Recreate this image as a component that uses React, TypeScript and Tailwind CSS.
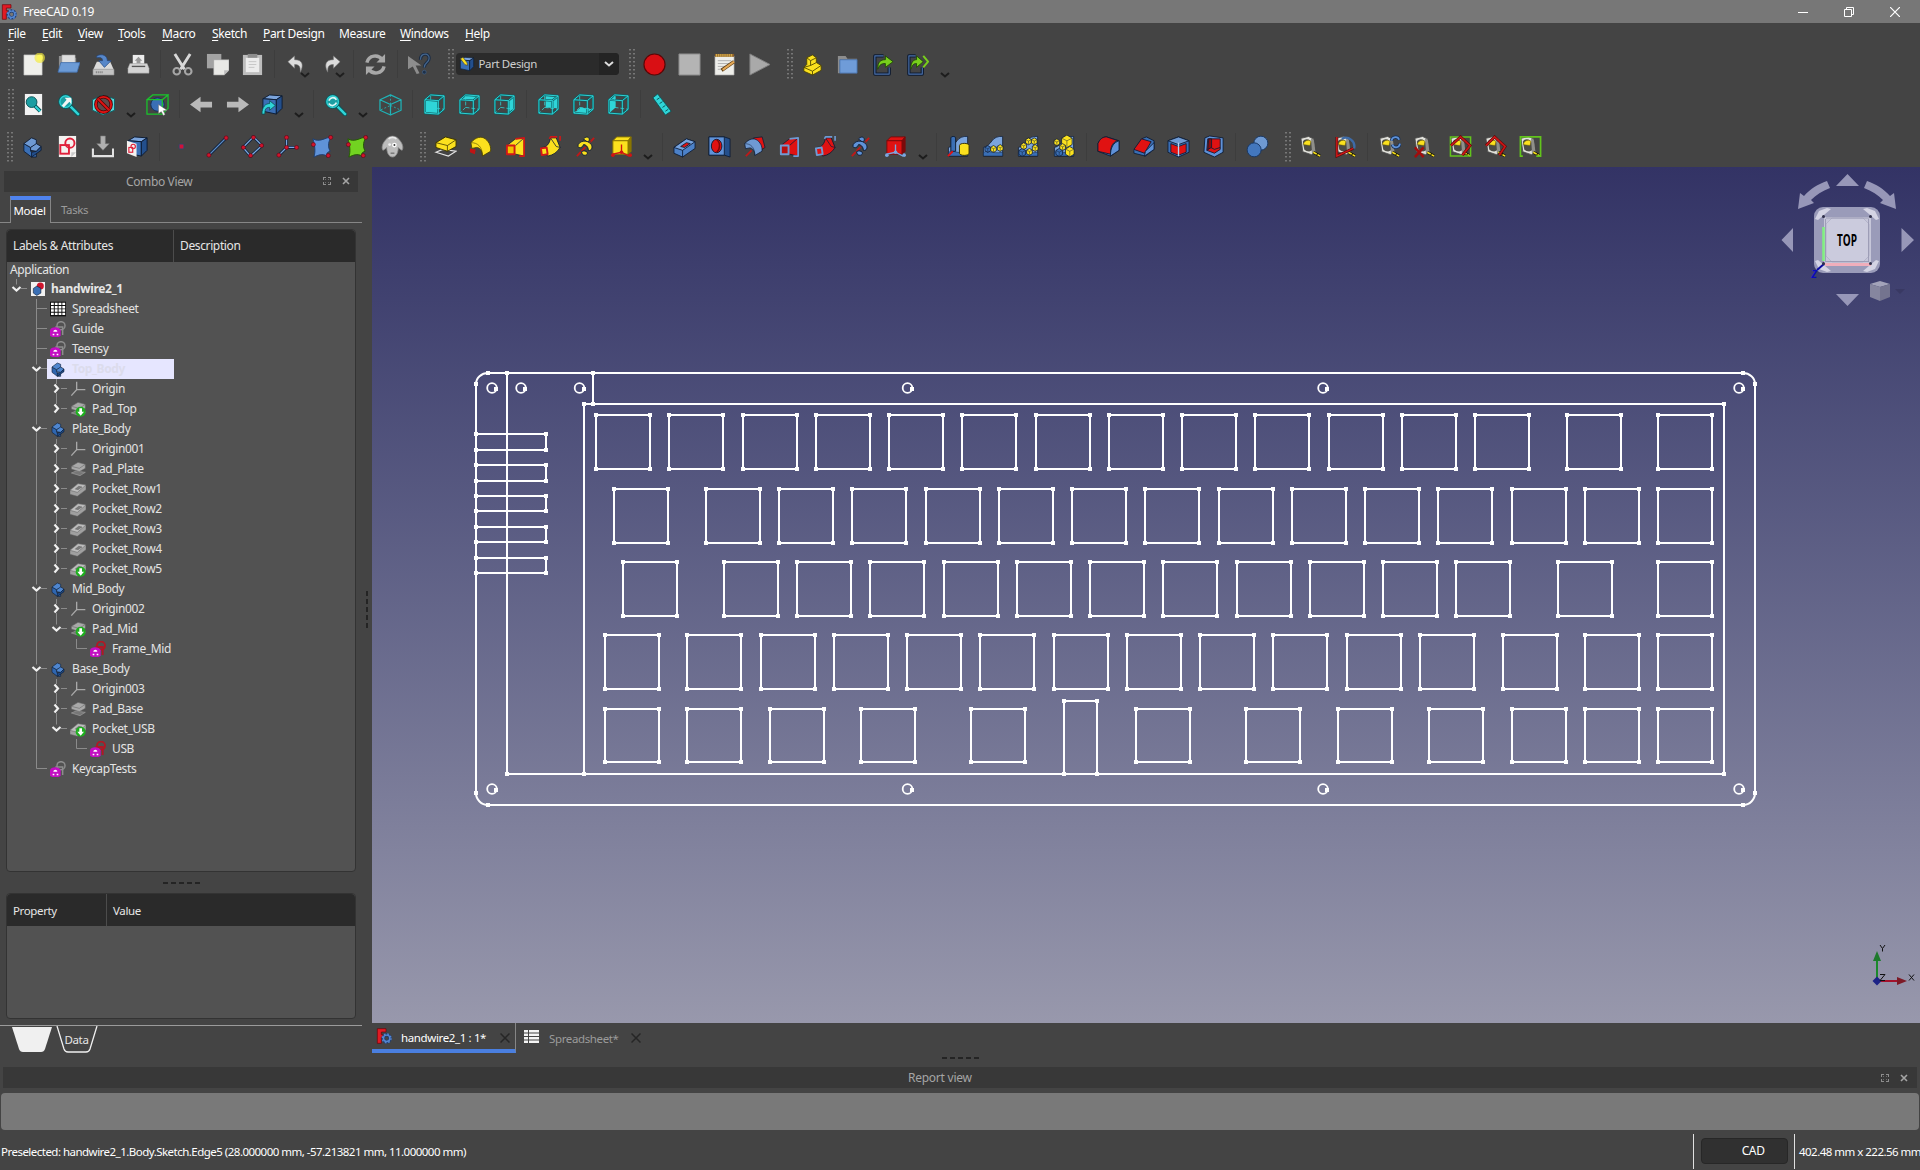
import React from "react";

type Drawing = React.ReactNode;

const CY = "#2fd5d8";
const BL = "#3a6fb5";
const BD = "#0e1c33";
const YE = "#fbe11e";
const RD = "#e01212";

/* ---------- shared shapes ---------- */

const Cube = ({ top, left, right, line = BD }: { top: string; left: string; right: string; line?: string }) => (
  <g stroke={line} strokeWidth="1" strokeLinejoin="round">
    <path d="M2 6 9 2l13 1-6 4z" fill={top} />
    <path d="M2 6l14 1v15L2 19z" fill={left} />
    <path d="M16 7l6-4v13l-6 6z" fill={right} />
  </g>
);

const viewFaces: Record<string, string> = {
  front: "M2 7l14 1v14L2 21z",
  top: "M2 7l6-5 14 1-6 5z",
  right: "M16 8l6-5v14l-6 5z",
  rear: "M9 3l12 1v12l-12-1z",
  bottom: "M2 21l7-6 12 2-5 5z",
  left: "M2 7l7-5v13l-7 6z",
};

const ViewCube = ({ face }: { face: string }) => (
  <g strokeLinejoin="round">
    <path d={viewFaces[face]} fill={CY} />
    <g fill="none" stroke="#0d5f63" strokeWidth="2.2">
      <path d="M2 7l14 1v14L2 21zM2 7l6-5 14 1-6 5M22 3v14l-6 5" />
    </g>
    <g fill="none" stroke={CY} strokeWidth="1">
      <path d="M2 7l14 1v14L2 21zM2 7l6-5 14 1-6 5M22 3v14l-6 5" />
      <path d="M8 3v12l-6 6M8 15l14 2" strokeDasharray="4 2" strokeWidth="0.8" />
    </g>
  </g>
);

const Magnifier = ({ children }: { children?: Drawing }) => (
  <>
    <path d="M14 14l8 8" stroke="#0b5558" strokeWidth="4.6" strokeLinecap="round" />
    <path d="M14 14l8 8" stroke={CY} strokeWidth="2.6" strokeLinecap="round" />
    <circle cx="9" cy="9" r="7.3" fill="#1c9ea2" stroke="#0b5558" />
    <circle cx="9" cy="9" r="6" fill="none" stroke={CY} strokeWidth="1.2" />
    {children}
  </>
);

const Dots = ({ pts }: { pts: number[][] }) => (
  <g fill="#d0142c" stroke="#5a0613" strokeWidth="0.6">
    {pts.map(([x, y], i) => (
      <circle key={i} cx={x} cy={y} r="2.1" />
    ))}
  </g>
);

const FreeCADMark = () => (
  <>
    <path d="M2 1h13v5H8v4h5v4H8v9H2z" fill="#e01b24" stroke="#6e0008" strokeWidth="1" />
    <circle cx="16" cy="15.5" r="5.2" fill="none" stroke="#1d3a70" strokeWidth="5" />
    <circle cx="16" cy="15.5" r="6.600" fill="none" stroke="#5586cf" strokeWidth="2" strokeDasharray="2.6 2.6" />
    <circle cx="16" cy="15.5" r="4.800" fill="none" stroke="#5586cf" strokeWidth="2.2" />
  </>
);

const Tape = ({ children }: { children?: Drawing }) => (
  <>
    <path d="M2 3.500l8-2 5 2.500 2 13-4 3.500-9-3z" fill="#e2e2dc" stroke="#4b4b4b" strokeWidth="0.9" />
    <path d="M12.500 3l3 2 1.500 12-3.500 3z" fill="#8f8f8a" />
    <path d="M4 7c2-4 8-3 9 1l.5 8c-2 2-6 1-8-1z" fill="#4c4c46" />
    <path d="M4.500 10a5 5 0 0 1 8-3.500l-1 4.500z" fill={YE} stroke="#6b5d00" strokeWidth="0.500" />
    <path d="M15 18l7 4" stroke="#1c1c00" strokeWidth="3" />
    <path d="M15 18l7 4" stroke={YE} strokeWidth="1.700" strokeDasharray="4 1" />
    {children}
  </>
);

const BodyShape = ({ c, d, l }: { c: string; d: string; l: string }) => (
  <g stroke={BD} strokeWidth="0.9" strokeLinejoin="round">
    <path d="M3 9l7 4 0 4 6 3v3L11 23 3 17z" fill={c} />
    <path d="M3 9l8-6 5 2v5l-6 3z" fill={l} />
    <path d="M10 13l6-4 5 3-5 5-6-1z" fill={l} />
    <path d="M11 23l10-7v-4l-5 5-5 1z" fill={d} />
  </g>
);

const Wedge = ({ a, b, line }: { a: string; b: string; line: string }) => (
  <g strokeLinejoin="round">
    <path d="M3 11l9-7 9-1v19l-9-2H3z" fill={b} stroke={BD} strokeWidth="0.8" />
    <path d="M12 11l9-8" stroke={BD} strokeWidth="0.8" />
    <path d="M12 4l9-1v19h-5" fill="none" stroke={line} strokeWidth="1.8" />
    <path d="M3 11h8v9H3z" fill={a} stroke={line} strokeWidth="2" />
  </g>
);

const Pipe = ({ a, line }: { a: string; line: string }) => (
  <g strokeLinejoin="round">
    <path d="M3 13c5 0 8-4 9-10h6l4 10c-3 5-7 8-13 9z" fill={a} stroke={BD} strokeWidth="0.9" />
    <path d="M12 3l6 9 4 1" fill="none" stroke={BD} strokeWidth="0.8" />
    <path d="M11 4l1-2h7M22 1v5" fill="none" stroke={line} strokeWidth="1.700" />
    <path d="M2 14l6-1 1 7-6 1z" fill={a} stroke={line} strokeWidth="2" />
  </g>
);

const Helix = ({ a, line }: { a: string; line: string }) => (
  <g>
    <path d="M3 22L21 3" stroke={line} strokeWidth="2" strokeDasharray="6 1" />
    <path d="M4 12c0-6 10-8 14-2 2 3 0 7-3 6 0-4-3-6-5-6-1 2-3 5-6 2z" fill={a} stroke={BD} />
    <path d="M10 4c3-3 6-2 6 1s-4 2-6-1z" fill={a} stroke={BD} />
    <path d="M8 18c0-2 6-2 6 1s-6 3-6-1z" fill={a} stroke={BD} />
  </g>
);

const Arch = ({ a, s }: { a: string; s: string }) => (
  <g stroke={s} strokeLinejoin="round">
    <path d="M2 8c5-6 11-7 15-4 5 4 6 9 5.500 13L14 22c0-6-3-9-6-9l-5 1z" fill={a} strokeWidth="0.9" />
    <path d="M2 8c7 0 12 4 12 14" fill="none" strokeWidth="0.600" />
  </g>
);

const PrimCube = ({ f, s, dot }: { f: string; s: string; dot: string }) => (
  <g strokeLinejoin="round">
    <path d="M3 6l4-4h15l-3 4z" fill={f} stroke={s} />
    <path d="M3 6h16v14H3z" fill={f} stroke={s} />
    <path d="M19 6l3-4v15l-3 3z" fill={s} stroke={s} />
    <path d="M12 10v8M3 20l9-2 8 4" fill="none" stroke={dot} strokeWidth="1.4" />
    <g fill={dot}>
      <circle cx="3" cy="21" r="1.9" />
      <circle cx="12" cy="18" r="1.9" />
      <circle cx="21" cy="21" r="1.9" />
    </g>
  </g>
);

const Terrain = ({ children }: { children?: Drawing }) => (
  <g strokeLinejoin="round">
    <path d="M1.500 22V13c4-1 6-3 9-7 2-3 6-5 11-4.500V22z" fill="#7ba4dc" stroke={BD} strokeWidth="0.8" />
    <path d="M1.500 22v-4c6-3 8 2 20 0v4z" fill={BL} stroke={BD} strokeWidth="0.500" />
    {children}
  </g>
);

const YBox = ({ x, y, s = 7, c = YE }: { x: number; y: number; s?: number; c?: string }) => (
  <g stroke={BD} strokeWidth="0.8" fill={c}>
    <path d={`M${x} ${y + s * 0.3}l${s * 0.5} ${-s * 0.3}l${s * 0.5} ${s * 0.3}v${s * 0.6}l${-s * 0.5} ${s * 0.3}l${-s * 0.5} ${-s * 0.3}z`} />
    <path d={`M${x} ${y + s * 0.3}l${s * 0.5} ${s * 0.25}l${s * 0.5} ${-s * 0.25}M${x + s * 0.5} ${y + s * 0.55}v${s * 0.6}`} fill="none" strokeWidth="0.500" />
  </g>
);

const Curl = ({ flip }: { flip?: boolean }) => (
  <g transform={flip ? "translate(24 0) scale(-1 1)" : undefined}>
    <path d="M3 9l7-6v4c8 0 10 5 6 13 0-6-1-8-6-8v4z" fill="#dcdcdc" stroke="#777" strokeWidth="0.6" />
  </g>
);

const ArrowLeft = () => <path d="M0 12L11 4v5h12v6H11v5z" fill="#b9b9b9" />;

/* ---------- toolbar drawings ---------- */

const icons: Record<string, Drawing> = {
  new: (
    <>
      <path d="M2 2h19v21H2z" fill="#efefeb" stroke="#bbb" strokeWidth="0.6" />
      <circle cx="18.500" cy="5" r="5.500" fill="#f3ea3a" opacity="0.65" />
      <circle cx="18.500" cy="5" r="3.200" fill="#fdf75b" />
    </>
  ),
  open: (
    <>
      <path d="M2 3h7l2 2h9v15H2z" fill="#8f8f8f" />
      <path d="M5 2h14v12H5z" fill="#dedede" stroke="#888" strokeWidth="0.5" />
      <path d="M4 10h20l-3 10H1z" fill="#6c9bd6" stroke="#3c6aa8" strokeWidth="0.8" />
    </>
  ),
  save: (
    <>
      <path d="M5 9h14l4 9H1z" fill="#dadada" />
      <path d="M1 17h22v6H1z" fill="#c3c3c3" stroke="#888" strokeWidth="0.6" />
      <path d="M4 20h7" stroke="#777" strokeDasharray="1 1" strokeWidth="2" />
      <path d="M5 3c6-3 11 0 11 5h4l-7 7-6-7h4c0-3-2-4-6-3z" fill="#5787c9" stroke="#23457d" strokeWidth="0.7" />
    </>
  ),
  print: (
    <>
      <path d="M6 2h12v12H6z" fill="#ededed" />
      <path d="M12 4l4 4h-2v3h-4V8H8z" fill="#999" />
      <path d="M3 11h18l2 5v5H1v-5z" fill="#d4d4d4" stroke="#999" strokeWidth="0.5" />
      <path d="M5 14h14" stroke="#555" strokeWidth="1.4" />
    </>
  ),
  cut: (
    <>
      <path d="M4 1l10 16M20 1L10 17" stroke="#d8d8d8" strokeWidth="3" />
      <circle cx="6" cy="19" r="3.4" fill="none" stroke="#a6a6a6" strokeWidth="2.2" />
      <circle cx="18" cy="19" r="3.4" fill="none" stroke="#a6a6a6" strokeWidth="2.2" />
    </>
  ),
  copy: (
    <>
      <path d="M1 1h15v15H1z" fill="#a3a3a3" />
      <path d="M8 7h16v11l-5 5H8z" fill="#e9e9e6" stroke="#999" strokeWidth="0.6" />
      <path d="M19 23v-5h5z" fill="#bcbcbc" />
    </>
  ),
  paste: (
    <>
      <path d="M2 2h20v21H2z" fill="#bdbdbd" />
      <path d="M5 5h14v15H5z" fill="#ececec" />
      <path d="M7 1h10v4H7z" fill="#8d8d8d" />
      <path d="M8 9h8M8 12h8M8 15h6" stroke="#c5c5c5" />
    </>
  ),
  undo: <Curl />,
  redo: <Curl flip />,
  refresh: (
    <g fill="none" stroke="#a8a8a8" strokeWidth="3.6">
      <path d="M3 10c2-8 12-9 16-3" />
      <path d="M21 14c-2 8-12 9-16 3" />
      <path d="M22 1v9h-9z" fill="#a8a8a8" stroke="none" />
      <path d="M2 23v-9h9z" fill="#a8a8a8" stroke="none" />
    </g>
  ),
  whats: (
    <>
      <path d="M0 3l14 10H8l4 8-3 1-4-8-5 3z" fill="#8d8d8d" />
      <path d="M13 7c0-8 10-7 9-1 0 4-5 4-5 9" fill="none" stroke="#1d2d44" strokeWidth="3.4" />
      <path d="M13 7c0-8 10-7 9-1 0 4-5 4-5 9" fill="none" stroke="#45678f" strokeWidth="1.2" />
      <circle cx="17" cy="20" r="2" fill="#1d3049" stroke="#45678f" strokeWidth="0.6" />
    </>
  ),
  pdesign: (
    <>
      <Cube top="#7ba4dc" left={BL} right="#234f8c" />
      <path d="M2 4l7 9 4 1-1-4-6-8z" fill={YE} stroke="#333" strokeWidth="0.8" />
    </>
  ),
  record: <circle cx="12" cy="12" r="11" fill="#d90f14" stroke="#5c0505" strokeWidth="1.2" />,
  stop: <path d="M1 1h22v22H1z" fill="#b4b4b4" stroke="#8a8a8a" />,
  macros: (
    <>
      <path d="M2 3h20v20H2z" fill="#eeeeea" stroke="#999" strokeWidth="0.6" />
      <path d="M2 1h20v3H2z" fill="#8c5f2a" />
      <path d="M3 2.5h18" stroke="#e3bd52" strokeDasharray="1 1" strokeWidth="3" />
      <path d="M5 8h14M5 11h14M5 14h8M5 17h5" stroke="#b0b0b0" />
      <path d="M9 18L22 9" stroke="#5d3b10" strokeWidth="3.6" />
      <path d="M10 17.5L22 9" stroke="#e3a857" strokeWidth="2.2" />
    </>
  ),
  play: <path d="M2 1l21 11L2 23z" fill="#a9a9a9" stroke="#808080" />,
  part: (
    <g stroke="#4c4300" strokeWidth="0.9" strokeLinejoin="round" fill={YE}>
      <path d="M3 15l3-3 0-7 6-3 4 3v5l5 3v5l-9 5-9-4z" />
      <path d="M6 5l4 3v5M10 8l6-3M10 13l-7 2 9 4 9-6M10 13l6-3M12 19v4" fill="none" />
    </g>
  ),
  folder: (
    <>
      <path d="M2 3h8l2 3h10v15H2z" fill="#8d8d8d" />
      <path d="M4 7h18v14H4z" fill="#6f9cd8" stroke="#3f6aa5" strokeWidth="0.8" />
    </>
  ),
  export: (
    <>
      <path d="M13 3H4v19h15v-7" fill="none" stroke="#0c1a30" strokeWidth="3.4" strokeLinejoin="round" />
      <path d="M13 3H4v19h15v-7" fill="none" stroke="#4a6fa8" strokeWidth="1.2" strokeLinejoin="round" />
      <path d="M7 17c0-8 3-10 8-10V3l8 6-8 6v-4c-4 0-6 1-8 6z" fill="#78cf1c" stroke="#1c4a00" strokeWidth="0.9" />
    </>
  ),
  exportAll: (
    <>
      <path d="M10 3H3v19h14v-7" fill="none" stroke="#0c1a30" strokeWidth="3.4" strokeLinejoin="round" />
      <path d="M10 3H3v19h14v-7" fill="none" stroke="#4a6fa8" strokeWidth="1.2" strokeLinejoin="round" />
      <path d="M5 17c0-8 3-10 6-10V3l7 6-7 6v-4c-3 0-4 1-6 6z" fill="#78cf1c" stroke="#1c4a00" strokeWidth="0.9" />
      <path d="M18 3l5 6-5 6" fill="none" stroke="#78cf1c" strokeWidth="2" />
    </>
  ),
  fitAll: (
    <>
      <path d="M3 1h18v22H3z" fill="#f2f2f2" />
      <path d="M13 13l6 6" stroke="#0b5558" strokeWidth="4" />
      <path d="M13 13l6 6" stroke={CY} strokeWidth="2" />
      <circle cx="10" cy="9.500" r="5.600" fill="#1c9ea2" stroke="#0b5558" />
    </>
  ),
  fitSel: (
    <Magnifier>
      <path d="M5 13l5-6-2-2h7v7l-2-3-6 6z" fill="#f4f4f4" />
    </Magnifier>
  ),
  drawStyle: (
    <>
      <path d="M0.500 7l10-5 13 4v12l-12 5-11-5z" fill="#58d6da" stroke="#0d5f63" />
      <circle cx="12" cy="12" r="8" fill="#5f4a4a" stroke="#4d0505" strokeWidth="3.600" />
      <circle cx="12" cy="12" r="8" fill="none" stroke={RD} strokeWidth="2" />
      <path d="M6.500 6.500l11 11" stroke="#4d0505" strokeWidth="3.600" />
      <path d="M6.500 6.500l11 11" stroke={RD} strokeWidth="2" />
    </>
  ),
  boxSel: (
    <>
      <circle cx="12" cy="12" r="7" fill={BL} stroke="#14305a" />
      <g fill="none" stroke="#19c52b" strokeWidth="1.3">
        <path d="M1 7h16v15H1zM1 7l6-5h16l-6 5M23 2v14l-6 6" />
      </g>
      <path d="M13 12l9 6-4 .5 2 4-2 1-2-4-3 2z" fill="#fff" stroke="#666" strokeWidth="0.5" />
    </>
  ),
  back: <ArrowLeft />,
  fwd: (
    <g transform="translate(24 0) scale(-1 1)">
      <ArrowLeft />
    </g>
  ),
  link: (
    <>
      <Cube top="#7ba4dc" left={BL} right="#234f8c" />
      <path d="M1 22c0-8 4-11 8-11V8l6 5-6 5v-3c-4 0-5 2-5 7z" fill={CY} stroke="#0b4b50" strokeWidth="0.8" />
    </>
  ),
  sync: (
    <Magnifier>
      <path d="M5 8c2-4 6-4 8-1M13 10c-2 4-6 4-8 1" fill="none" stroke="#d9f6f6" strokeWidth="1.8" />
    </Magnifier>
  ),
  iso: (
    <g fill="none" stroke="#1fb3b7" strokeWidth="1.3" strokeLinejoin="round">
      <path d="M1 7l11-5 11 5v11l-11 5-11-5zM1 7l11 5 11-5M12 12v11" />
      <path d="M12 2v11L1 18M12 13l11 5" strokeDasharray="2 2" strokeWidth="0.9" />
    </g>
  ),
  vFront: <ViewCube face="front" />,
  vTop: <ViewCube face="top" />,
  vRight: <ViewCube face="right" />,
  vRear: <ViewCube face="rear" />,
  vBottom: <ViewCube face="bottom" />,
  vLeft: <ViewCube face="left" />,
  ruler: (
    <>
      <path d="M7 1L2 5l13 18 6-4z" fill={CY} stroke="#0b5558" strokeWidth="0.9" />
      <path d="M9 5l-3 2M12 9l-3 2M15 13l-3 2M18 17l-3 2" stroke="#0b5558" />
    </>
  ),
  body: <BodyShape c={BL} d="#234f8c" l="#6f9ad3" />,
  sketch: (
    <>
      <path d="M3 1h18v22H3z" fill="#f4f2f0" />
      <path d="M16 23v-5h5z" fill="#c9c9c9" />
      <rect x="4.500" y="10.500" width="9" height="9" fill="none" stroke="#e0203a" strokeWidth="2" />
      <circle cx="14.500" cy="8.500" r="4.800" fill="none" stroke="#e0203a" strokeWidth="2" />
    </>
  ),
  import: (
    <>
      <path d="M10 1h5v8h4l-6.500 7L6 9h4z" fill="#b0b0b0" stroke="#777" strokeWidth="0.6" />
      <path d="M2 14v8h21v-8" fill="none" stroke="#e2e2e2" strokeWidth="2.2" />
    </>
  ),
  mapSketch: (
    <>
      <Cube top="#7ba4dc" left={BL} right="#234f8c" />
      <path d="M1 6l10 3v14L1 19z" fill="#f4f2f0" />
      <rect x="3" y="13" width="4" height="5" fill="none" stroke="#e0203a" strokeWidth="1.200" />
      <circle cx="7.500" cy="12" r="2.300" fill="none" stroke="#e0203a" strokeWidth="1.200" />
    </>
  ),
  point: <rect x="9.500" y="9.500" width="5" height="5" rx="1" fill="#cf1239" stroke="#1c4f7a" strokeWidth="0.8" />,
  line: (
    <>
      <path d="M3 21L21 3" stroke="#10233f" strokeWidth="3" />
      <path d="M3 21L21 3" stroke="#5f8fca" strokeWidth="1.3" />
      <Dots pts={[[3, 21], [21, 3]]} />
    </>
  ),
  plane: (
    <>
      <path d="M13 2l9 9-12 11-8-9z" fill="none" stroke="#10233f" strokeWidth="3" />
      <path d="M13 2l9 9-12 11-8-9z" fill="none" stroke="#7ba7dd" strokeWidth="1.3" />
      <Dots pts={[[13, 2.5], [21.500, 11], [10, 21.500], [2.500, 13]]} />
    </>
  ),
  axes: (
    <>
      <path d="M11 2v11l11 0M11 13l-8 8" fill="none" stroke="#10233f" strokeWidth="3" />
      <path d="M11 2v11l11 0M11 13l-8 8" fill="none" stroke="#7ba7dd" strokeWidth="1.3" />
      <Dots pts={[[11, 2.500], [11, 13], [21.500, 13], [3, 21]]} />
    </>
  ),
  patchB: (
    <>
      <path d="M2 4c7 4 12-1 19-2-4 7-3 11-1 15-4 1-4 3-3 5-6-3-9-1-14 1 2-6 1-12-1-19z" fill="#5f92d8" stroke="#1d3f73" />
      <Dots pts={[[20.500, 2.500], [2.500, 10], [18, 21.500]]} />
    </>
  ),
  patchG: (
    <>
      <path d="M2 4c7 4 12-1 19-2-4 7-3 11-1 15-4 1-4 3-3 5-6-3-9-1-14 1 2-6 1-12-1-19z" fill="#72d321" stroke="#235b00" />
      <Dots pts={[[20.500, 2.500], [2.500, 10], [18, 21.500]]} />
    </>
  ),
  sheep: (
    <>
      <path d="M5 5c3-5 11-5 14 0 3 3 5 8 3 11-2-1-3-2-4-3 0 5-2 10-6 10s-6-5-6-10c-1 1-2 2-4 3-2-3 0-8 3-11z" fill="#bdbdbd" stroke="#8b8b8b" strokeWidth="0.8" />
      <path d="M8 4c2-2 6-2 8 0" stroke="#e8e8e8" strokeWidth="2" fill="none" />
      <circle cx="9" cy="10" r="1.500" fill="#eee" />
      <circle cx="14" cy="10.500" r="2.500" fill="#fff" />
      <circle cx="14" cy="10.500" r="1" fill="#333" />
      <path d="M10 19h4" stroke="#777" strokeWidth="1.500" />
    </>
  ),
  pad: (
    <>
      <path d="M2 18l7-3 14 2-8 5z" fill="none" stroke="#e4e4e4" strokeWidth="1.200" />
      <path d="M2 8l10-6 11 3v7l-9 5-12-4z" fill={YE} stroke="#3d3500" />
      <path d="M2 8l12 3 9-6M14 11v6" fill="none" stroke="#3d3500" strokeWidth="0.800" />
    </>
  ),
  revolve: (
    <>
      <Arch a={YE} s="#4c4300" />
      <path d="M1 14l6 1-1 5-5-2z" fill="#c01414" />
    </>
  ),
  loft: <Wedge a="#f0c000" b={YE} line="#d01818" />,
  pipe: <Pipe a={YE} line="#d01818" />,
  helix: <Helix a={YE} line="#c01818" />,
  prim: <PrimCube f={YE} s="#8a7600" dot="#d01414" />,
  pocket: (
    <g stroke={BD} strokeWidth="0.900" strokeLinejoin="round">
      <path d="M1 13l13-9 9 3v7l-13 9-9-4z" fill="#4c81c8" />
      <path d="M1 13l9 3 13-9-9-3z" fill="#76a2dd" />
      <path d="M8 12l6-4 4 1-6 4z" fill={RD} />
      <path d="M10 16v7" />
    </g>
  ),
  hole: (
    <>
      <g stroke={BD} strokeWidth="0.900" strokeLinejoin="round">
        <path d="M1 2h16l6 2v19l-6-2H1z" fill="#234f8c" />
        <path d="M1 2h16v19H1z" fill="#5f92d8" />
      </g>
      <ellipse cx="9" cy="11.500" rx="5.500" ry="7" fill={RD} stroke={BD} />
      <path d="M9 5c4 2 4 10 0 13" fill="none" stroke="#7c0808" strokeWidth="1.500" />
    </>
  ),
  groove: (
    <>
      <path d="M11 3l9-1 3 11-5 3z" fill={RD} stroke={BD} strokeWidth="0.800" />
      <g transform="translate(0 2) scale(.88)">
        <Arch a="#6f9ad3" s={BD} />
      </g>
      <path d="M3 22l6-6" stroke="#c01818" strokeWidth="1.800" />
    </>
  ),
  subLoft: <Wedge a="#b80e0e" b={RD} line="#6f9ad3" />,
  subPipe: <Pipe a={RD} line="#6f9ad3" />,
  subHelix: <Helix a="#5f92d8" line="#c01818" />,
  subPrim: <PrimCube f={RD} s="#7c0a0a" dot="#7aa6e0" />,
  mirror: (
    <Terrain>
      <path d="M4 3c0-2 5-2 5 0v14H4z" fill={BL} stroke={BD} />
      <path d="M13 11c0-3 10-3 10 0v8c0 3-10 3-10 0z" fill={YE} stroke="#3d3500" />
      <path d="M1 22l5-5" stroke={RD} strokeWidth="2" />
    </Terrain>
  ),
  linear: (
    <Terrain>
      <YBox x={3} y={11} s={6} c={BL} />
      <YBox x={9} y={11} s={6} />
      <YBox x={16} y={10} s={6} />
    </Terrain>
  ),
  polar: (
    <Terrain>
      <YBox x={2} y={14} c={BL} />
      <YBox x={4} y={8} s={6} />
      <YBox x={9} y={3} s={6} />
      <YBox x={15} y={3} s={6} />
      <YBox x={16} y={10} s={6} />
      <YBox x={10} y={14} s={6} />
    </Terrain>
  ),
  multi: (
    <Terrain>
      <YBox x={3} y={14} c={BL} />
      <YBox x={1} y={4} s={6} />
      <YBox x={9} y={0} s={11} />
      <YBox x={13} y={12} s={9} />
      <YBox x={7} y={9} s={6} />
    </Terrain>
  ),
  fillet: (
    <g stroke={BD} strokeWidth="0.900" strokeLinejoin="round">
      <path d="M1 17V9c2-5 5-7 9-7l13 4v10l-9 6z" fill={BL} />
      <path d="M1 17V9c2-5 5-7 9-7l12 4c-5 1-8 5-8 14z" fill={RD} />
      <path d="M14 22c0-9 3-14 9-16v10z" fill="#5f92d8" />
    </g>
  ),
  chamfer: (
    <g stroke={BD} strokeWidth="0.900" strokeLinejoin="round">
      <path d="M2 16l8-12 5-2 8 4v9l-9 7-12-3z" fill={BL} />
      <path d="M2 15l8-11 10 3-7 12z" fill={RD} />
      <path d="M13 22l1-5 9-9v7z" fill="#5f92d8" />
    </g>
  ),
  draft: (
    <g stroke={BD} strokeWidth="0.900" strokeLinejoin="round">
      <path d="M1 6l11-4 11 4v12l-11 5-11-5z" fill={BL} />
      <path d="M1 6l11-4 11 4-11 4z" fill="#6f9ad3" />
      <path d="M4 9l8 3v9l-8-3zM20 9l-8 3v9l8-3z" fill={RD} />
      <path d="M12 8v14" stroke="#b9d2f2" strokeWidth="1.400" />
    </g>
  ),
  thick: (
    <g stroke={BD} strokeWidth="0.900" strokeLinejoin="round">
      <path d="M3 3l5-2 14 2v15l-9 5-11-5z" fill="#5f92d8" />
      <path d="M6 4h13v11l-6 4-8-3z" fill={RD} />
      <path d="M9 4v9l4 2 6-2M9 13l-4 3" fill="none" />
      <path d="M7 4h3v9l-4 2z" fill="#8c0c0c" />
    </g>
  ),
  bool: (
    <g stroke="#183764">
      <circle cx="15.500" cy="8.500" r="7.300" fill="#6f9ad3" />
      <circle cx="8.500" cy="15.500" r="7.300" fill="#4377bd" />
    </g>
  ),
  mLin: <Tape />,
  mAng: (
    <Tape>
      <path d="M8 4a9 9 0 0 1 13 10" fill="none" stroke="#3d6ba8" strokeWidth="2.400" />
      <path d="M3 2v20l17-8" fill="none" stroke="#5a0808" strokeWidth="2.800" />
      <path d="M3 2v20l17-8" fill="none" stroke="#d01818" strokeWidth="1.500" />
    </Tape>
  ),
  mRef: (
    <Tape>
      <path d="M14 6c1-5 7-5 8-1M23 9c-1 5-7 5-8 1" fill="none" stroke="#14305a" strokeWidth="3.400" />
      <path d="M14 6c1-5 7-5 8-1M23 9c-1 5-7 5-8 1" fill="none" stroke="#5f92d8" strokeWidth="1.800" />
    </Tape>
  ),
  mClr: (
    <Tape>
      <path d="M2 13l9 10M11 13L2 23" stroke="#a10d0d" strokeWidth="2.600" />
    </Tape>
  ),
  mTogAll: (
    <Tape>
      <path d="M1.500 2h21v20h-21z" fill="none" stroke="#62c41c" strokeWidth="1.600" />
      <path d="M2 11L12 2l10 9-8 10" fill="none" stroke="#5a0808" strokeWidth="3" />
      <path d="M2 11L12 2l10 9-8 10" fill="none" stroke="#c81616" strokeWidth="1.800" />
    </Tape>
  ),
  mTog3d: (
    <Tape>
      <path d="M2 11L11 2l11 10-6 9" fill="none" stroke="#5a0808" strokeWidth="3" />
      <path d="M2 11L11 2l11 10-6 9" fill="none" stroke="#c81616" strokeWidth="1.800" />
    </Tape>
  ),
  mTogD: (
    <Tape>
      <path d="M4 22H1.500V2h21v20H18" fill="none" stroke="#62c41c" strokeWidth="1.800" />
    </Tape>
  ),
};

/* ---------- toolbar parts ---------- */

const Svg = ({ children, className = "size-6" }: { children: Drawing; className?: string }) => (
  <svg viewBox="0 0 24 24" className={`shrink-0 ${className}`}>
    {children}
  </svg>
);

const Chevron = ({ className }: { className: string }) => (
  <svg viewBox="0 0 10 6" className={`h-1.5 w-2.5 ${className}`}>
    <path d="M1 1l4 3.500L9 1" fill="none" stroke="currentColor" strokeWidth="2" />
  </svg>
);

const Tool = ({ name, menu }: { name: string; menu?: boolean }) => (
  <button className="relative flex h-10 w-[35.1px] shrink-0 items-center justify-center">
    <Svg className="size-[23px]">{icons[name]}</Svg>
    {menu && <Chevron className="absolute right-1 bottom-1.5 text-[#1f1f1f]" />}
  </button>
);

const Sep = () => (
  <div className="flex w-[9px] shrink-0 items-center justify-center">
    <div className="h-7 w-px bg-[#3d3d3d]" />
  </div>
);

const More = () => (
  <div className="flex h-10 w-[19.5px] shrink-0 items-end justify-center pb-1.5">
    <Chevron className="text-[#1d1d1d]" />
  </div>
);

const Grip = ({ className = "w-[18px]" }: { className?: string }) => (
  <div className={`flex shrink-0 items-center justify-end pr-px ${className}`}>
    <svg viewBox="0 0 7 30" className="h-[30px] w-[7px]">
      {Array.from({ length: 8 }, (_, i) => (
        <g key={i} fill="#777">
          <rect x="0" y={i * 4} width="2" height="1.500" />
          <rect x="4" y={i * 4} width="2" height="1.500" />
        </g>
      ))}
    </svg>
  </div>
);

const Bar = ({ items }: { items: string }) => (
  <>
    {items.split(" ").map((n, i) =>
      n === "|" ? (
        <Sep key={i} />
      ) : n === "v" ? (
        <More key={i} />
      ) : n === ":" ? (
        <Grip key={i} />
      ) : (
        <Tool key={i} name={n} menu={n === "undo" || n === "redo"} />
      ),
    )}
  </>
);

/* ---------- model tree ---------- */

type Row = { label: string; icon: string; lines: string; sel?: boolean };

/* lines: one letter per 20px column. s = blank, i = through, t = branch, l = last branch, o = open, c = closed, z = closed & last, e = open & last */
const rows: Row[] = [
  { label: "Spreadsheet", icon: "sheet", lines: "st" },
  { label: "Guide", icon: "skg", lines: "st" },
  { label: "Teensy", icon: "skg", lines: "st" },
  { label: "Top_Body", icon: "body", lines: "so", sel: true },
  { label: "Origin", icon: "origin", lines: "sic" },
  { label: "Pad_Top", icon: "padTip", lines: "siz" },
  { label: "Plate_Body", icon: "body", lines: "so" },
  { label: "Origin001", icon: "origin", lines: "sic" },
  { label: "Pad_Plate", icon: "padG", lines: "sic" },
  { label: "Pocket_Row1", icon: "pocketG", lines: "sic" },
  { label: "Pocket_Row2", icon: "pocketG", lines: "sic" },
  { label: "Pocket_Row3", icon: "pocketG", lines: "sic" },
  { label: "Pocket_Row4", icon: "pocketG", lines: "sic" },
  { label: "Pocket_Row5", icon: "pocketTip", lines: "siz" },
  { label: "Mid_Body", icon: "body", lines: "so" },
  { label: "Origin002", icon: "origin", lines: "sic" },
  { label: "Pad_Mid", icon: "padTip", lines: "sie" },
  { label: "Frame_Mid", icon: "skr", lines: "sisl" },
  { label: "Base_Body", icon: "body", lines: "so" },
  { label: "Origin003", icon: "origin", lines: "sic" },
  { label: "Pad_Base", icon: "padG", lines: "sic" },
  { label: "Pocket_USB", icon: "pocketTip", lines: "sie" },
  { label: "USB", icon: "skr", lines: "sisl" },
  { label: "KeycapTests", icon: "skg", lines: "sl" },
];

const guides: Record<string, string> = {
  s: "",
  i: "M9.500 0V20",
  t: "M9.500 0V20M9.500 9.500H20",
  l: "M9.500 0V9.500H20",
  o: "M9.500 0V20M14 9.500H20",
  c: "M9.500 0V20M14 9.500H20",
  z: "M9.500 0V9.500M14 9.500H20",
  e: "M9.500 0V9.500M14 9.500H20",
  r: "M9.500 0V9.500M12 9.500H20",
};

const Guide = ({ k }: { k: string }) => (
  <svg viewBox="0 0 20 20" className="size-5 shrink-0">
    <path d={guides[k]} fill="none" stroke="#8b8b8b" />
    {"oer".includes(k) && (
      <>
        <path d="M5 5.500h9v8H5z" fill="#525252" />
        <path d="M5.500 8l4 3.500 4-3.500" fill="none" stroke="#f0f0f0" strokeWidth="2.200" />
      </>
    )}
    {"cz".includes(k) && (
      <>
        <path d="M6 5h7v9H6z" fill="#525252" />
        <path d="M7.500 5.500l3.500 4-3.500 4" fill="none" stroke="#f0f0f0" strokeWidth="2.200" />
      </>
    )}
  </svg>
);

const Tip = () => (
  <>
    <circle cx="16" cy="16" r="7.500" fill="#1fae1f" />
    <path d="M14 11h4v5h3l-5 6-5-6h3z" fill="#fff" />
  </>
);

const PadG = () => (
  <g stroke="#5e5e5e" strokeWidth="0.800">
    <path d="M2 18l7-3 14 2-8 5z" fill="#777" stroke="#aaa" />
    <path d="M2 8l10-6 11 3v6l-9 5-12-4z" fill="#a9a9a9" />
    <path d="M2 8l12 3 9-6" fill="none" />
  </g>
);

const PocketG = () => (
  <g stroke="#666" strokeWidth="0.800" strokeLinejoin="round">
    <path d="M0 14L12 4l12 2v7l-13 10-11-3z" fill="#a0a0a0" />
    <path d="M0 14l11 3L24 6 12 4z" fill="#bdbdbd" />
    <path d="M8 12l5-4 5 1-6 4z" fill="#7a7a7a" />
  </g>
);

const Ghost = () => (
  <>
    <path d="M0 14c1-6 14-6 16 0v8c-3 3-13 3-16 0z" fill="#c40fc4" />
    <path d="M5 16c0-4 6-4 6 0z" fill="#fff" />
    <path d="M4 19h2.500v2.500H4zM10 19h2.500v2.500H10z" fill="#fff" />
  </>
);

const treeIcons: Record<string, Drawing> = {
  sheet: (
    <>
      <path d="M0 1h24v22H0z" fill="#111" />
      {[2.5, 7.5, 12.5, 17.5].map((y) => (
        <path key={y} d={`M1.500 ${y}h4.200v3.600H1.500zM7.200 ${y}h4.200v3.600H7.200zM12.900 ${y}h4.200v3.600h-4.200zM18.500 ${y}h4.200v3.600h-4.200z`} fill="#fff" />
      ))}
    </>
  ),
  skg: (
    <>
      <circle cx="16.500" cy="7" r="6" fill="none" stroke="#8d8d8d" strokeWidth="2.200" />
      <path d="M8 9h11v12" fill="none" stroke="#8d8d8d" strokeWidth="2.200" />
      <Ghost />
    </>
  ),
  skr: (
    <>
      <circle cx="16.500" cy="7" r="6" fill="none" stroke="#b31724" strokeWidth="2.800" />
      <path d="M8 9h11v12" fill="none" stroke="#b31724" strokeWidth="2.800" />
      <Ghost />
    </>
  ),
  body: <BodyShape c="#2f66b0" d="#1f4a86" l="#4f86cf" />,
  origin: <path d="M10 1v12l-8 9M10 13h13" fill="none" stroke="#a8a8a8" strokeWidth="2" />,
  padG: <PadG />,
  padTip: (
    <>
      <PadG />
      <Tip />
    </>
  ),
  pocketG: <PocketG />,
  pocketTip: (
    <>
      <PocketG />
      <Tip />
    </>
  ),
};

const TreeRow = ({ r }: { r: Row }) => (
  <div className="flex h-5 items-center">
    {r.lines.split("").map((k, i) => (
      <Guide key={i} k={k} />
    ))}
    <div className={`flex h-5 items-center ${r.sel ? "w-[127px] bg-[#e6e6ff]" : ""}`}>
      <div className="flex w-6 justify-start pl-[3px]">
        <Svg className="size-4">{treeIcons[r.icon]}</Svg>
      </div>
      <span className={`pl-px leading-5 tracking-[-0.37px] ${r.sel ? "font-bold text-[#dcdcec]" : "text-[#e4e4e4]"}`}>{r.label}</span>
    </div>
  </div>
);

/* ---------- sketch ---------- */

const S = 54;
const run = (x: number, n: number) => Array.from({ length: n }, (_, i) => Math.round(x + i * 73.25));
const keyRows = [
  { y: 415, h: S, xs: [...run(596, 13), 1567, 1658] },
  { y: 489, h: S, xs: [614, ...run(705.8, 14)] },
  { y: 562, h: S, xs: [623, ...run(723.8, 11), 1558, 1658] },
  { y: 635, h: S, xs: [605, ...run(687.4, 11), 1503, 1585, 1658] },
  { y: 709, h: 53, xs: [605, 687, 770, 861, 971, 1136, 1246, 1338, 1429, 1512, 1585, 1658] },
];
const slots = [[434, 450], [465, 481], [496, 511], [527, 542], [558, 573]];
const holes = [[492, 388], [521, 388], [579.5, 388], [907.5, 388], [1323, 388], [1739, 388], [492, 789], [907.5, 789], [1323, 789], [1739, 789]];
const nodes = [
  [488, 373], [476, 384], [507, 373], [593, 373], [593, 404], [584, 404], [1724, 404], [1724, 774], [584, 774], [507, 774],
  [1743, 373], [1755, 384], [1755, 793], [1743, 805], [476, 793], [488, 805], [1064, 701], [1097, 701], [1064, 774], [1097, 774],
];

const Node = ({ x, y }: { x: number; y: number }) => <rect x={x - 2} y={y - 2} width="4" height="4" fill="#fff" />;

const Sketch = () => (
  <svg viewBox="372 167 1548 856" className="block h-[856px] w-[1548px]" shapeRendering="crispEdges">
    <g fill="none" stroke="#fff" strokeWidth="2">
      <path d="M488 373H1743M1755 384V793M1743 805H488M476 793V384" />
      <path d="M507 373V774H1724V404H584V774M593 373V404M1064 774V701H1097V774" />
      <g shapeRendering="auto">
        <path d="M476 384a12 11 0 0 1 12-11M1743 373a12 11 0 0 1 12 11M1755 793a12 12 0 0 1-12 12M488 805a12 12 0 0 1-12-12" />
      </g>
      {slots.map(([a, b]) => (
        <path key={a} d={`M476 ${a}H546V${b}H476`} />
      ))}
      {keyRows.map((r) => r.xs.map((x) => <rect key={`${x}-${r.y}`} x={x} y={r.y} width={S} height={r.h} />))}
      {holes.map(([x, y]) => (
        <circle key={`${x}-${y}`} cx={x} cy={y} r="4.800" strokeWidth="1.800" shapeRendering="auto" />
      ))}
    </g>
    {holes.map(([x, y]) => (
      <Node key={`${x}-${y}`} x={x + 4} y={y + 0.5} />
    ))}
    {nodes.map(([x, y]) => (
      <Node key={`${x}-${y}`} x={x} y={y} />
    ))}
    {slots.flatMap(([a, b]) => [a, b].flatMap((y) => [476, 546].map((x) => <Node key={`${x}-${y}`} x={x} y={y} />)))}
    {keyRows.flatMap((r) =>
      r.xs.flatMap((x) => [0, S].flatMap((dx) => [0, r.h].map((dy) => <Node key={`${x + dx}-${r.y + dy}`} x={x + dx} y={r.y + dy} />))),
    )}

    <g shapeRendering="auto">
      {/* navigation cube */}
      <g fill="#9797b8">
        <path d="M1836 186l11.500-12 11.500 12zM1836 294h23l-11.500 12zM1781.500 240l11.500-12v24zM1914 240l-12.500-12v24z" />
        <path d="M1827 181l3 7c-8 3-14 7-19 12l3 3-16 6 2-16 4 3c6-7 14-12 23-15z" />
        <path d="M1867 181l-3 7c8 3 14 7 19 12l-3 3 16 6-2-16-4 3c-6-7-14-12-23-15z" />
      </g>
      <rect x="1814" y="207" width="66" height="66" rx="9" fill="#9a9bb9" />
      <path d="M1815 219l4-8 8-3 4 1-13 11zM1879 219l-4-8-8-3-4 1 13 11zM1815 261l4 8 8 3 4-1-13-11zM1879 261l-4 8-8 3-4-1 13-11z" fill="#d4d4e4" />
      <rect x="1824" y="217" width="47" height="46" fill="#c6c6d9" />
      <path d="M1832 218h31l6 6v32l-6 6h-31l-6-6v-32z" fill="#cbcbdd" stroke="#b4b4ca" />
      <path d="M1826 218h43M1868.500 219v43M1825.500 219v43M1826 261.500h43" stroke="#9494ae" fill="none" strokeWidth="0.800" />
      <path d="M1823.500 227v34" stroke="#80f080" strokeWidth="2.500" />
      <path d="M1825 264.500h46" stroke="#f0aebb" strokeWidth="3" />
      <path d="M1824 264l-7 6" stroke="#0a0aa0" strokeWidth="2" />
      <g fill="#30304a">
        <circle cx="1823.500" cy="216.500" r="1.500" />
        <circle cx="1870.500" cy="216.500" r="1.500" />
        <circle cx="1870.500" cy="263.500" r="1.500" />
        <circle cx="1823.500" cy="263.500" r="1.500" />
      </g>
      <text x="1837" y="245.500" textLength="20" lengthAdjust="spacingAndGlyphs" className="fill-black font-['Open_Sans',sans-serif] text-[16px] font-bold tracking-normal">
        TOP
      </text>
      <text x="1811.500" y="278" className="fill-[#0a0ac0] font-['Open_Sans',sans-serif] text-[10px] font-bold italic">
        Z
      </text>
      <path d="M1870 284l10-3 10 3-10 3z" fill="#a3a3b9" />
      <path d="M1870 284l10 3v14l-10-4z" fill="#86869f" />
      <path d="M1890 284l-10 3v14l10-4z" fill="#74748f" />
      <path d="M1895 289h10l-5 5z" fill="#393963" />

      {/* axis cross */}
      <path d="M1877 981V958" stroke="#1b8a2b" strokeWidth="2" />
      <path d="M1873 961l4-10 4 10z" fill="#1e7a2c" />
      <path d="M1877 981h22" stroke="#a3122c" strokeWidth="2" />
      <path d="M1897 977l10 4-10 4z" fill="#7d1a26" />
      <path d="M1877 976.500l4.500 4.500-4.500 4.500-4.500-4.500z" fill="#1c2286" />
      <g fill="none" stroke="#111" strokeWidth="1">
        <path d="M1880 945l2.500 3.500 2.500-3.500M1882.500 948.500v3M1880 974.500h5l-5 6h5M1909 974.500l5 6M1914 974.500l-5 6" />
      </g>
    </g>
  </svg>
);

/* ---------- panels ---------- */

const DockTools = () => (
  <div className="flex items-center gap-[11px] text-[#8d8d8d]">
    <svg viewBox="0 0 8 8" className="size-2" shapeRendering="crispEdges">
      <path d="M0 0h3v1H1v2H0zM5 0h3v3H7V1H5zM0 5h1v2h2v1H0zM7 5h1v3H5V7h2z" fill="currentColor" />
      <path d="M2 2h1v1H2zM5 2h1v1H5zM2 5h1v1H2zM5 5h1v1H5z" fill="#6c6c6c" />
    </svg>
    <svg viewBox="0 0 8 8" className="size-2">
      <path d="M1 1l6 6M7 1L1 7" stroke="#a5a5a5" strokeWidth="1.600" />
    </svg>
  </div>
);

const menus: [string, string][] = [
  ["File", "w-[34px]"],
  ["Edit", "w-9"],
  ["View", "w-[40px]"],
  ["Tools", "w-11"],
  ["Macro", "w-[50px]"],
  ["Sketch", "w-[51px]"],
  ["Part Design", "w-[76px]"],
  ["Measure", "w-[61px]"],
  ["Windows", "w-[65px]"],
  ["Help", "w-10"],
];

const SplitDots = ({ vertical }: { vertical?: boolean }) => (
  <div className={`flex gap-[3px] ${vertical ? "flex-col" : ""}`}>
    {[0, 1, 2, 3, 4].map((i) => (
      <div key={i} className={`bg-[#242424] ${vertical ? "h-[5px] w-0.5" : "h-0.5 w-[5px]"}`} />
    ))}
  </div>
);

const Cross = () => (
  <svg viewBox="0 0 10 10" className="size-2.5">
    <path d="M0.500 0.500l9 9M9.500 0.500l-9 9" stroke="#262626" strokeWidth="1.500" />
  </svg>
);

export default function App() {
  return (
    <div className="flex h-[1170px] w-[1920px] flex-col overflow-hidden bg-[#444444] font-['Noto_Sans','Open_Sans',sans-serif] text-[12px] tracking-[-0.37px] text-[#e6e6e6]">
      <header className="flex h-[23px] shrink-0 items-center bg-[#777777]">
        <Svg className="ml-px size-4">
          <FreeCADMark />
        </Svg>
        <span className="ml-1.5 text-white">FreeCAD 0.19</span>
        <div className="ml-auto flex items-center gap-9 pr-5">
          <svg viewBox="0 0 10 10" className="size-2.5">
            <path d="M0 5.500h10" stroke="#fff" />
          </svg>
          <svg viewBox="0 0 10 10" className="size-2.5">
            <path d="M.5 2.500h7v7h-7zM2.500 2.500v-2h7v7h-2" fill="none" stroke="#fff" />
          </svg>
          <svg viewBox="0 0 10 10" className="size-2.5">
            <path d="M0 0l10 10M10 0L0 10" stroke="#fff" strokeWidth="1.200" />
          </svg>
        </div>
      </header>

      <nav className="flex h-[21px] shrink-0 items-center pl-2 text-white">
        {menus.map(([m, w]) => (
          <span key={m} className={w}>
            {m === "Measure" ? (
              m
            ) : (
              <>
                <span className="underline underline-offset-2">{m[0]}</span>
                {m.slice(1)}
              </>
            )}
          </span>
        ))}
      </nav>

      <div className="flex h-10 shrink-0">
        <Grip className="w-[15.5px]" />
        <Bar items="new open save print | cut copy paste | undo redo | refresh | whats :" />
        <div className="flex h-[22px] w-[163px] items-center self-center rounded-sm bg-[#2b2b2b]">
          <Svg className="ml-[3px] size-4">{icons.pdesign}</Svg>
          <span className="ml-1 text-[11.5px] tracking-[-0.4px] text-[#cfcfcf]">Part Design</span>
          <div className="ml-auto flex h-full w-5 items-center justify-center rounded-r-sm bg-[#242424]">
            <Chevron className="text-[#dddddd]" />
          </div>
        </div>
        <Bar items=": record stop macros play : part folder export exportAll v" />
      </div>
      <div className="flex h-10 shrink-0">
        <Grip className="w-[15.5px]" />
        <Bar items="fitAll fitSel drawStyle v boxSel | back fwd link v | sync v iso | vFront vTop vRight | vRear vBottom vLeft | ruler" />
      </div>
      <div className="mt-0.5 flex h-[41px] shrink-0">
        <Grip className="w-[15px]" />
        <Bar items="body sketch import mapSketch | point line plane axes patchB patchG sheep : pad revolve loft pipe helix prim v | pocket hole groove subLoft subPipe subHelix subPrim v | mirror linear polar multi | fillet chamfer draft thick | bool : mLin mAng | mRef mClr mTogAll mTog3d mTogD" />
      </div>

      <div className="flex h-[886px] shrink-0">
        <aside className="flex w-[362px] flex-col">
          <div className="mt-1 ml-1 flex h-[21px] w-[354px] items-center justify-between bg-[#383838] pr-2">
            <span className="pt-px pl-[122px] text-[#a5a5a5]">Combo View</span>
            <DockTools />
          </div>

          <div className="mt-1 flex h-[27px] items-stretch border-b border-[#868686]">
            <div className="-mb-px ml-2.5 flex w-[41px] items-center justify-center border-x border-t-4 border-x-[#868686] border-t-[#4f83ee] bg-[#444444] pr-0.5 pb-0.5 text-[11.5px] text-white">
              Model
            </div>
            <div className="flex items-center pt-0.5 pl-2.5 text-[11.5px] text-[#9b9b9b]">Tasks</div>
          </div>

          <section className="mt-1.5 ml-1.5 flex h-[645px] w-[350px] flex-col rounded border border-[#333333] bg-[#525252]">
            <div className="flex h-8 shrink-0 items-center rounded-t bg-[#2a2a2a]">
              <div className="flex h-full w-[167px] items-center border-r border-[#4c4c4c] pl-1.5">Labels &amp; Attributes</div>
              <div className="pl-1.5">Description</div>
            </div>
            <div className="flex h-[17px] items-center pl-[3px]">Application</div>
            <div className="flex h-5 items-center">
              <Guide k="r" />
              <div className="ml-1 flex size-[14px] items-center justify-center bg-[#f2f2f2]">
                <Svg className="size-3.5">
                  <circle cx="16" cy="7" r="6" fill="#d0142c" />
                  <path d="M4 11l6-4 7 4v8l-7 4-6-4z" fill={BL} stroke={BD} />
                </Svg>
              </div>
              <span className="ml-1.5 font-bold tracking-[-0.3px]">handwire2_1</span>
            </div>
            {rows.map((r) => (
              <TreeRow key={r.label} r={r} />
            ))}
          </section>

          <div className="flex h-[21px] items-center justify-center">
            <SplitDots />
          </div>

          <section className="ml-1.5 flex h-[126px] w-[350px] flex-col rounded border border-[#333333] bg-[#525252]">
            <div className="flex h-8 shrink-0 items-center rounded-t bg-[#2a2a2a] text-[11.5px]">
              <div className="flex h-full w-[100px] items-center border-r border-[#4c4c4c] pl-1.5">Property</div>
              <div className="pl-1.5">Value</div>
            </div>
          </section>

          <div className="mt-1.5 flex h-7 items-start border-t border-[#9b9b9b]">
            <svg viewBox="0 0 40 27" className="ml-3 h-[27px] w-10">
              <path d="M0 1h40l-7 22q-1 3-4 3H11q-3 0-4-3z" fill="#f0f0f0" />
            </svg>
            <div className="relative ml-1 flex h-[27px] w-[42px] items-center justify-center pr-px text-[11.5px]">
              <svg viewBox="0 0 42 27" className="absolute inset-0 h-[27px] w-[42px]">
                <path d="M1 0l7 23q1 3 4 3h18q3 0 4-3l7-23" fill="none" stroke="#f0f0f0" strokeWidth="1.300" />
              </svg>
              Data
            </div>
          </div>
        </aside>

        <div className="flex h-[886px] w-2.5 items-start justify-center pt-[424px]">
          <SplitDots vertical />
        </div>

        <main className="flex w-[1548px] flex-col">
          <div className="bg-linear-to-b from-[#333365] to-[#9898ac]">
            <Sketch />
          </div>
          <div className="flex h-[30px] items-stretch">
            <div className="flex w-[144px] items-center border-r border-b-4 border-r-[#868686] border-b-[#4a7fe0] pt-1 pl-1 text-[11.5px] text-white">
              <Svg className="mb-1 size-4">
                <FreeCADMark />
              </Svg>
              <span className="ml-[9px] w-[99px] whitespace-nowrap">handwire2_1 : 1*</span>
              <Cross />
            </div>
            <div className="flex items-center pl-2 text-[11.5px] text-[#9b9b9b]">
              <svg viewBox="0 0 15 13" className="mb-1 h-[13px] w-[15px]">
                <path d="M0 0h4v2.500H0zM5 0h10v2.500H5zM0 3.500h4V6H0zM5 3.500h10V6H5zM0 7h4v2.500H0zM5 7h10v2.500H5zM0 10.500h4V13H0zM5 10.500h10V13H5z" fill="#f4f4f4" />
              </svg>
              <span className="mt-0.5 ml-[10px] w-[82px]">Spreadsheet*</span>
              <Cross />
            </div>
          </div>
        </main>
      </div>

      <div className="flex h-[14px] shrink-0 items-start justify-center pt-1">
        <SplitDots />
      </div>
      <div className="mx-[3px] flex h-[21px] shrink-0 items-center bg-[#383838] pr-[9px]">
        <span className="ml-[905px] tracking-[-0.25px] text-[#a5a5a5]">Report view</span>
        <div className="ml-auto">
          <DockTools />
        </div>
      </div>
      <div className="mx-px mt-[5px] h-[37px] shrink-0 rounded-sm bg-[#797979]" />

      <footer className="flex h-10 shrink-0 items-center pt-0.5 text-[11.5px] tracking-[-0.52px] text-white">
        <span className="pt-0.5 pl-px">Preselected: handwire2_1.Body.Sketch.Edge5 (28.000000 mm, -57.213821 mm, 11.000000 mm)</span>
        <div className="ml-auto flex h-[35px] w-[102px] items-center justify-center border-x border-[#e0e0e0]">
          <div className="flex h-[26px] w-[87px] items-center justify-end rounded border border-[#272727] bg-[#303030] pr-[22px] text-[12px] tracking-[-0.4px]">CAD</div>
        </div>
        <span className="w-[125px] pt-0.5 pl-1 whitespace-nowrap">402.48 mm x 222.56 mm</span>
      </footer>
    </div>
  );
}
